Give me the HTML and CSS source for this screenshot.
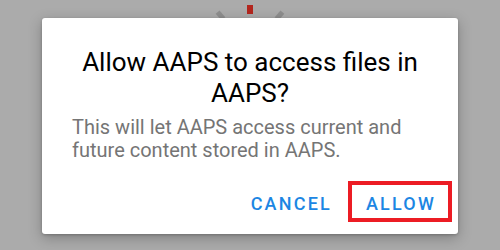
FILE: index.html
```html
<!DOCTYPE html>
<html>
<head>
<meta charset="utf-8">
<link rel="stylesheet" href="styles.css">
</head>
<body>
<div class="spinner">
  <span class="tick tick-left"></span>
  <span class="tick tick-top"></span>
  <span class="tick tick-right"></span>
</div>
<div class="dialog">
  <h1 class="title">Allow AAPS to access files in AAPS?</h1>
  <p class="message">This will let AAPS access current and future content stored in AAPS.</p>
  <div class="actions">
    <button class="btn">CANCEL</button>
    <button class="btn btn-highlight">ALLOW</button>
  </div>
</div>
</body>
</html>
```
FILE: styles.css
```css
html, body {
  margin: 0;
  padding: 0;
}
body {
  width: 500px;
  height: 250px;
  background: #ababab;
  font-family: Roboto, "Noto Sans", sans-serif;
  overflow: hidden;
  position: relative;
}
.spinner {
  position: absolute;
  left: 0;
  top: 0;
  width: 500px;
  height: 30px;
}
.tick {
  position: absolute;
  display: block;
}
.tick-top {
  left: 247px;
  top: 5px;
  width: 6px;
  height: 9px;
  background: #b3261e;
}
.tick-left {
  left: 218px;
  top: 11px;
  width: 5px;
  height: 9px;
  background: #8e8e8e;
  transform: rotate(-40deg);
}
.tick-right {
  left: 277px;
  top: 11px;
  width: 5px;
  height: 9px;
  background: #8e8e8e;
  transform: rotate(40deg);
}
.dialog {
  position: relative;
  margin: 18px 0 0 42px;
  width: 416px;
  height: 216px;
  box-sizing: border-box;
  background: #fff;
  border-radius: 3px;
  box-shadow: 0 4px 14px rgba(0,0,0,0.25), 0 1px 3px rgba(0,0,0,0.2);
  padding: 29px 24px 12px;
  display: flex;
  flex-direction: column;
}
.title {
  margin: 0;
  font-size: 26px;
  line-height: 31px;
  font-weight: 400;
  color: #000;
  text-align: center;
  padding: 0;
}
.message {
  margin: 7px 0 0;
  font-size: 20px;
  line-height: 23px;
  color: #757575;
  padding-left: 6px;
}
.actions {
  margin-top: auto;
  display: flex;
  justify-content: flex-end;
  gap: 0;
  margin-right: -18px;
}
.btn {
  font-family: Roboto, "Noto Sans", sans-serif;
  font-weight: 500;
  font-size: 18px;
  letter-spacing: 2.2px;
  color: #1c86e3;
  background: transparent;
  border: 4px solid transparent;
  height: 41px;
  padding: 3px 12px 0 14px;
  cursor: pointer;
}
.btn-highlight {
  border-color: #ec1c24;
}
```
